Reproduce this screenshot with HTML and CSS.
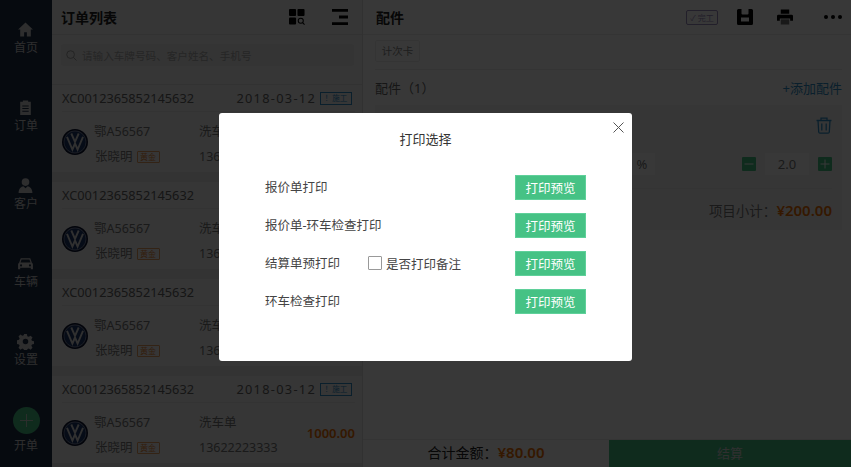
FILE: index.html
```html
<!DOCTYPE html>
<html lang="zh">
<head>
<meta charset="utf-8">
<title>打印选择</title>
<link rel="stylesheet" href="styles.css">
</head>
<body>
<svg class="defs" width="0" height="0">
  <symbol id="vw" viewBox="0 0 26 26">
    <circle cx="13" cy="13" r="13" fill="#0a1230"/>
    <circle cx="13" cy="13" r="11.400" fill="#7a86a4"/>
    <circle cx="13" cy="13" r="10.600" fill="#1e3668"/>
    <path d="M5 7.800 10.400 20.500l2.600-6 2.600 6L21 7.800M9.300 4.500 13 12.800 16.700 4.500" fill="none" stroke="#d8d8d8" stroke-width="1.900"/>
  </symbol>
</svg>
<div class="app">
  <nav class="side">
    <a class="nav-item">
      <svg class="nav-icon" viewBox="0 0 16 16"><path d="M8 1.500 1 8h2v6.500h3.700v-4h2.600v4H13V8h2z"/></svg>
      <span>首页</span>
    </a>
    <a class="nav-item">
      <svg class="nav-icon" viewBox="0 0 16 16"><path fill-rule="evenodd" d="M3 2.500h2.500V1.500h5v1H13V15H3zM5 6v1h6V6zm0 2.500v1h6v-1zM5 11v1h6v-1z"/></svg>
      <span>订单</span>
    </a>
    <a class="nav-item">
      <svg class="nav-icon" viewBox="0 0 16 16"><circle cx="8" cy="4.800" r="3.600"/><path d="M1.500 15c0-4 2.500-6 4.500-6.300L8 10.500l2-1.800c2 .3 4.500 2.300 4.500 6.300z"/></svg>
      <span>客户</span>
    </a>
    <a class="nav-item">
      <svg class="nav-icon" viewBox="0 0 16 16"><path fill-rule="evenodd" d="M3.500 3h9l1.500 4.200c.7.400 1 1 1 1.800v4.500h-2V12H3v1.500H1V9c0-.8.300-1.400 1-1.800zm.8 1.300L3.300 7h9.400l-1-2.700zM3.800 8.800a1 1 0 1 0 0 2 1 1 0 0 0 0-2zm8.400 0a1 1 0 1 0 0 2 1 1 0 0 0 0-2z"/></svg>
      <span>车辆</span>
    </a>
    <a class="nav-item">
      <svg class="nav-icon" viewBox="0 0 16 16"><path fill-rule="evenodd" d="M6.700 1h2.600l.4 2 1.300.6 1.800-1.100 1.800 1.800-1.100 1.800.6 1.300 2 .4v2.600l-2 .4-.6 1.300 1.100 1.800-1.800 1.800-1.800-1.100-1.300.6-.4 2H6.700l-.4-2-1.300-.6-1.800 1.100-1.800-1.800 1.100-1.800-.6-1.300-2-.4V6.800l2-.4.6-1.300-1.100-1.800 1.800-1.800L5 2.600l1.300-.6zM8 5.500a2.600 2.600 0 1 0 0 5.200 2.600 2.600 0 0 0 0-5.200z"/></svg>
      <span>设置</span>
    </a>
    <a class="nav-open">
      <span class="open-circle"><svg class="open-plus" viewBox="0 0 14 14"><path d="M7 0v14M0 7h14"/></svg></span>
      <span>开单</span>
    </a>
  </nav>

  <section class="list">
    <header class="list-head">
      <h1 class="title">订单列表</h1>
      <div class="head-icons">
        <svg class="head-icon" viewBox="0 0 17 17"><rect x="0" y="0" width="7.500" height="7.500" rx="1"/><rect x="9" y="0" width="7.500" height="7.500" rx="1"/><rect x="0" y="9" width="7.500" height="7.500" rx="1"/><circle cx="12.500" cy="12.500" r="2.700" fill="none" stroke="#000" stroke-width="1.100"/><path d="m14.500 14.500 2 2" stroke="#000" stroke-width="1.100"/></svg>
        <svg class="head-icon" viewBox="0 0 16 16"><path d="M0 0h16v2.800H0zM7 6.500h9v3H7zM0 13.200h16V16H0z"/></svg>
      </div>
    </header>
    <div class="search-wrap">
      <div class="search">
        <svg class="search-icon" viewBox="0 0 12 12"><circle cx="5" cy="5" r="4.200"/><path d="m8 8 3.500 3.500"/></svg>
        <span>请输入车牌号码、客户姓名、手机号</span>
      </div>
    </div>

    <article class="order">
      <div class="order-head"><span class="no">XC0012365852145632</span><span class="date">2018-03-12</span><span class="state">！施工</span></div>
      <div class="order-body">
        <svg class="logo"><use href="#vw"/></svg>
        <div class="col-a"><span>鄂A56567</span><span class="name">张晓明<em class="level">黄金</em></span></div>
        <div class="col-b"><span>洗车单</span><span>13622223333</span></div>
        <strong class="amount">1000.00</strong>
      </div>
    </article>
    <article class="order">
      <div class="order-head"><span class="no">XC0012365852145632</span><span class="date">2018-03-12</span><span class="state">！施工</span></div>
      <div class="order-body">
        <svg class="logo"><use href="#vw"/></svg>
        <div class="col-a"><span>鄂A56567</span><span class="name">张晓明<em class="level">黄金</em></span></div>
        <div class="col-b"><span>洗车单</span><span>13622223333</span></div>
        <strong class="amount">1000.00</strong>
      </div>
    </article>
    <article class="order">
      <div class="order-head"><span class="no">XC0012365852145632</span><span class="date">2018-03-12</span><span class="state">！施工</span></div>
      <div class="order-body">
        <svg class="logo"><use href="#vw"/></svg>
        <div class="col-a"><span>鄂A56567</span><span class="name">张晓明<em class="level">黄金</em></span></div>
        <div class="col-b"><span>洗车单</span><span>13622223333</span></div>
        <strong class="amount">1000.00</strong>
      </div>
    </article>
    <article class="order">
      <div class="order-head"><span class="no">XC0012365852145632</span><span class="date">2018-03-12</span><span class="state">！施工</span></div>
      <div class="order-body">
        <svg class="logo"><use href="#vw"/></svg>
        <div class="col-a"><span>鄂A56567</span><span class="name">张晓明<em class="level">黄金</em></span></div>
        <div class="col-b"><span>洗车单</span><span>13622223333</span></div>
        <strong class="amount">1000.00</strong>
      </div>
    </article>
  </section>

  <section class="detail">
    <header class="detail-head">
      <h2 class="title">配件</h2>
      <div class="detail-tools">
        <span class="done">✓ 完工</span>
        <svg class="tool-icon" viewBox="0 0 16 16"><path fill-rule="evenodd" d="M1.500 0H4.500V4.500A1 1 0 0 0 5.500 5.500h5a1 1 0 0 0 1-1V0h3A1.500 1.500 0 0 1 16 1.500v13a1.500 1.500 0 0 1-1.500 1.500h-13A1.500 1.500 0 0 1 0 14.500v-13A1.500 1.500 0 0 1 1.500 0zM4 8.500V12.500h8V8.500z"/></svg>
        <svg class="tool-icon tool-print" viewBox="0 0 17 16"><path fill-rule="evenodd" d="M4 0h9v4.500H4zM1.500 5.500h14A1.500 1.500 0 0 1 17 7v5h-3V9.500H3V12H0V7a1.500 1.500 0 0 1 1.500-1.500z"/><path d="M4 10.500h9V16H4z" opacity=".55"/></svg>
        <span class="dots"><i></i><i></i><i></i></span>
      </div>
    </header>
    <div class="tabs"><span class="tab">计次卡</span></div>
    <div class="parts-head"><span class="parts-title">配件（1）</span><a class="add">+添加配件</a></div>
    <div class="part-card">
      <div class="part-top">
        <svg class="trash" viewBox="0 0 16 17"><path d="M0.500 3.500h15M5 3.500V1.200h6v2.300M2 3.500l.7 11.500a1.300 1.300 0 0 0 1.300 1.200h8a1.300 1.300 0 0 0 1.300-1.200L14 3.500M5.800 6.500v7M10.200 6.500v7"/></svg>
      </div>
      <div class="part-row">
        <span class="pct">%</span>
        <span class="step"><svg viewBox="0 0 14 14"><path d="M2.500 7h9"/></svg></span>
        <span class="qty">2.0</span>
        <span class="step"><svg viewBox="0 0 14 14"><path d="M2.500 7h9M7 2.500v9"/></svg></span>
      </div>
      <div class="part-sum">项目小计：<b class="money">¥200.00</b></div>
    </div>
    <footer class="bottom">
      <div class="total">合计金额：<b class="money">¥80.00</b></div>
      <div class="pay">结算</div>
    </footer>
  </section>
</div>

<div class="mask">
  <div class="modal" role="dialog">
    <svg class="close" viewBox="0 0 11 11"><path d="m.5.500 10 10M10.500.500l-10 10"/></svg>
    <h3 class="modal-title">打印选择</h3>
    <div class="modal-rows">
      <div class="row"><span class="label">报价单打印</span><button class="btn">打印预览</button></div>
      <div class="row"><span class="label">报价单-环车检查打印</span><button class="btn">打印预览</button></div>
      <div class="row"><span class="label">结算单预打印</span><label class="check"><i class="box"></i>是否打印备注</label><button class="btn">打印预览</button></div>
      <div class="row"><span class="label">环车检查打印</span><button class="btn">打印预览</button></div>
    </div>
  </div>
</div>
</body>
</html>
```
FILE: styles.css
```css
* { box-sizing: border-box; }
html, body { margin: 0; height: 100%; overflow: hidden; }
body {
  font-family: "Noto Sans", "Noto Sans CJK SC", sans-serif;
  color: #555;
  background: #fff;
}
.defs { position: absolute; }
.app { display: flex; height: 467px; }

/* sidebar */
.side {
  width: 52px;
  flex: none;
  background: #1d2d47;
  display: flex;
  flex-direction: column;
  align-items: center;
  padding-top: 21px;
  color: #cfcfcf;
  font-size: 12px;
}
.nav-item {
  height: 78px;
  display: flex;
  flex-direction: column;
  align-items: center;
  line-height: 17px;
  gap: 1px;
}
.nav-icon { width: 17px; height: 17px; fill: #cfcfcf; }
.nav-open {
  margin-top: -4px;
  display: flex;
  flex-direction: column;
  align-items: center;
  line-height: 17px;
  gap: 3px;
}
.open-circle {
  width: 27px; height: 27px; border-radius: 50%;
  background: #46c285;
  display: flex; align-items: center; justify-content: center;
}
.open-plus { width: 13px; height: 13px; stroke: #cfcfcf; stroke-width: 1; fill: none; }

/* list */
.list {
  width: 311px;
  flex: none;
  background: #e9e9e9;
  overflow: hidden;
  border-right: 1px solid #ddd;
}
.list-head {
  height: 35px;
  background: #f4f4f4;
  border-bottom: 1px solid #e4e4e4;
  padding: 0 14px 0 9px;
  display: flex;
  align-items: center;
  justify-content: space-between;
}
.title { margin: 0; font-size: 14px; font-weight: 700; color: #222; }
.head-icons { display: flex; gap: 27px; align-items: center; }
.head-icon { width: 16px; height: 16px; fill: #000; }
.search-wrap {
  height: 50px;
  background: #f4f4f4;
  border-bottom: 1px solid #e4e4e4;
  padding: 9px 8px 0 9px;
}
.search {
  height: 22px;
  background: #ececec;
  border-radius: 3px;
  display: flex;
  align-items: center;
  gap: 5px;
  padding-left: 5px;
  font-size: 10.600px;
  color: #aaa;
}
.search-icon { width: 11px; height: 11px; fill: none; stroke: #999; stroke-width: 1; }
.order { margin-bottom: 10px; background: #f5f5f5; padding: 0 7px 0 10px; }
.order-head {
  height: 27px;
  border-bottom: 1px solid #e7e7e7;
  display: flex;
  align-items: center;
  font-size: 12.750px;
  color: #666;
}
.no { flex: 1; }
.date { letter-spacing: 1.300px; }
.state {
  margin: 0 3px 0 4px;
  width: 32px;
  height: 13px;
  border: 1px solid #2f8fc9;
  color: #2f8fc9;
  font-size: 7.500px;
  line-height: 11px;
  text-align: center;
}
.order-body {
  height: 60px;
  display: flex;
  align-items: center;
  font-size: 12.500px;
  color: #777;
}
.logo { width: 26px; height: 26px; flex: none; }
.col-a, .col-b {
  display: flex;
  flex-direction: column;
  gap: 7px;
  margin-top: 4px;
  line-height: 18px;
}
.col-a { margin-left: 6px; width: 105px; }
.col-b { flex: 1; }
.name { display: flex; align-items: center; margin-left: 1px; }
.level {
  margin-left: 4px;
  width: 23px;
  height: 12px;
  border: 1px solid #e8a060;
  border-radius: 1px;
  color: #e8893a;
  font-size: 8px;
  font-style: normal;
  line-height: 10px;
  text-align: center;
}
.amount { font-size: 13px; color: #f07000; font-weight: 600; }

/* detail */
.detail {
  flex: 1;
  min-width: 0;
  background: #fff;
  display: flex;
  flex-direction: column;
}
.detail-head {
  height: 35px;
  border-bottom: 1px solid #eee;
  padding: 0 9px 0 13px;
  display: flex;
  align-items: center;
  justify-content: space-between;
}
.detail-tools { display: flex; align-items: center; }
.done {
  width: 32px;
  height: 15px;
  border: 1px solid #9a8cc0;
  border-radius: 2px;
  color: #9a8cc0;
  font-size: 8px;
  line-height: 13px;
  text-align: center;
  margin-right: 19px;
}
.tool-icon { width: 16px; height: 16px; fill: #000; }
.tool-print { margin-left: 24px; margin-right: 31px; }
.dots { display: flex; gap: 3px; }
.dots i { width: 4px; height: 4px; border-radius: 50%; background: #000; }
.tabs {
  height: 35px;
  margin: 0 9px 0 12px;
  border-bottom: 1px solid #eee;
  padding-top: 5px;
}
.tab {
  display: block;
  width: 45px;
  height: 22px;
  border: 1px solid #eee;
  border-radius: 2px;
  color: #888;
  font-size: 10.500px;
  line-height: 20px;
  text-align: center;
}
.parts-head {
  height: 35px;
  margin: 0 9px 0 12px;
  display: flex;
  align-items: center;
  justify-content: space-between;
  font-size: 13px;
}
.parts-title { color: #666; }
.add { color: #2f8fc9; }
.part-card {
  margin: 0 9px 0 12px;
  height: 125px;
  background: #f7f7f7;
}
.part-top { height: 38px; display: flex; justify-content: flex-end; padding: 12px 10px 0 0; }
.trash { width: 16px; height: 17px; fill: none; stroke: #2f8fc9; stroke-width: 1.300; }
.part-row {
  height: 46px;
  margin-right: 10px;
  padding-bottom: 4px;
  border-bottom: 1px solid #eee;
  display: flex;
  align-items: center;
  justify-content: flex-end;
  font-size: 13px;
  color: #777;
}
.pct { width: 26px; height: 22px; margin-right: 87px; background: #fff; text-align: center; line-height: 22px; }
.step { width: 14px; height: 14px; background: #46c285; border-radius: 1px; display: flex; }
.step svg { width: 14px; height: 14px; stroke: #fff; stroke-width: 1; }
.qty { width: 44px; height: 22px; margin: 0 9px; background: #fff; text-align: center; line-height: 22px; }
.part-sum {
  height: 41px;
  padding-right: 10px;
  display: flex;
  align-items: center;
  justify-content: flex-end;
  font-size: 13.500px;
  color: #777;
}
.money { color: #f07000; font-weight: 600; font-size: 15px; }
.bottom {
  margin-top: auto;
  height: 28px;
  border-top: 1px solid #eee;
  display: flex;
  font-size: 13px;
}
.total { width: 246px; padding-bottom: 3px; display: flex; align-items: center; justify-content: center; color: #222; font-size: 14px; }
.pay { flex: 1; padding-bottom: 3px; background: #46c285; color: #d8d8d8; display: flex; align-items: center; justify-content: center; }

/* modal */
.mask {
  position: absolute;
  inset: 0;
  background: rgba(0, 0, 0, .78);
  display: flex;
  justify-content: center;
  padding-top: 113px;
}
.modal {
  position: relative;
  width: 413px;
  height: 248px;
  background: #fff;
  border-radius: 3px;
  padding: 0 46px;
}
.close {
  position: absolute;
  top: 9px;
  right: 8px;
  width: 11px;
  height: 11px;
  fill: none;
  stroke: #555;
  stroke-width: 1;
}
.modal-title {
  margin: 0;
  padding-top: 17px;
  height: 62px;
  font-size: 13px;
  line-height: 18px;
  font-weight: 400;
  text-align: center;
  color: #333;
}
.modal-rows { display: flex; flex-direction: column; gap: 13px; }
.row {
  height: 25px;
  display: flex;
  align-items: center;
  font-size: 12.500px;
  color: #444;
}
.label { flex: none; min-width: 103px; padding-bottom: 2px; white-space: nowrap; }
.check { display: flex; align-items: center; gap: 4px; padding-bottom: 1px; }
.box {
  width: 14px;
  height: 14px;
  border: 1px solid #999;
  border-radius: 1px;
  background: #fff;
}
.btn {
  margin-left: auto;
  width: 71px;
  height: 25px;
  padding: 0;
  border: 1px solid #5fd09a;
  border-radius: 0;
  background: #46c285;
  color: #fff;
  font: inherit;
  font-size: 12.500px;
}
```
